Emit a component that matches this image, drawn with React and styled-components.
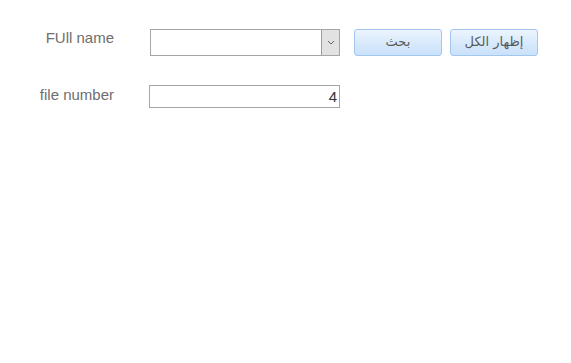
import React from "react";
import styled, { createGlobalStyle } from "styled-components";

const GlobalStyle = createGlobalStyle`
	html, body {
		margin: 0;
		padding: 0;
		background: #ffffff;
	}
	body {
		font-family: "Liberation Sans", Arial, sans-serif;
	}
`;

// whole search form
const Form = styled.form`
	display: grid;
	grid-template-columns: 114px auto;
	align-content: start;
	column-gap: 35px;
	row-gap: 29px;
	padding-top: 29px;
	width: 571px;
	height: 363px;
	box-sizing: border-box;
`;

const Label = styled.label`
	font-family: "Liberation Sans", Arial, sans-serif;
	font-size: 15px;
	line-height: 17px;
	color: #6e6e6e;
	text-align: right;
	padding-top: ${(props) => props.$top || 0}px;
`;

const Controls = styled.div`
	display: flex;
	align-items: flex-start;
`;

// fake combobox: field + grey arrow box
const Select = styled.div`
	display: flex;
	width: 190px;
	height: 27px;
	margin-left: 1px;
	box-sizing: border-box;
	border: 1px solid #a6a6a6;
	background: #fff;
`;

const SelectValue = styled.div`
	flex: 1;
`;

const ArrowBox = styled.div`
	width: 17px;
	display: flex;
	align-items: center;
	justify-content: center;
	background: #e2e2e2;
	border-left: 1px solid #9c9c9c;
`;

const Buttons = styled.div`
	display: flex;
	gap: 8px;
	margin-left: 14px;
`;

const Button = styled.button`
	width: 88px;
	height: 27px;
	box-sizing: border-box;
	border: 1px solid #a3c6ec;
	border-radius: 3px;
	background: linear-gradient(to bottom, #ecf5fe 0%, #d9eafc 50%, #c9e1fa 100%);
	color: #5a5a5a;
	font-family: "DejaVu Sans", sans-serif;
	font-size: 13px;
	line-height: 20px;
	padding: 0 0 2px;
	cursor: pointer;
`;

const Input = styled.input`
	width: 191px;
	height: 23px;
	box-sizing: border-box;
	border: 1px solid #a6a6a6;
	padding: 0 2px;
	text-align: right;
	font-family: "Liberation Sans", Arial, sans-serif;
	font-size: 15px;
	color: #333;
	outline: none;
`;

const Chevron = () => (
	<svg width="8" height="5" viewBox="0 0 8 5">
		<path d="M1 1 L4 4 L7 1" fill="none" stroke="#666" strokeWidth="1" />
	</svg>
);

export default function App() {
	return (
		<>
			<GlobalStyle />
			<Form onSubmit={(e) => e.preventDefault()}>
				<Label>FUll name</Label>
				<Controls>
					<Select>
						<SelectValue />
						<ArrowBox>
							<Chevron />
						</ArrowBox>
					</Select>
					<Buttons>
						<Button type="button" dir="rtl">بحث</Button>
						<Button type="button" dir="rtl">إظهار الكل</Button>
					</Buttons>
				</Controls>
				<Label $top={1}>file number</Label>
				<Controls>
					<Input type="text" defaultValue="4" />
				</Controls>
			</Form>
		</>
	);
}
